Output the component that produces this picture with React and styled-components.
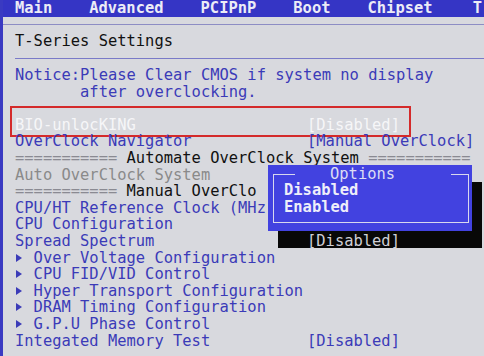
import React from 'react';
import styled, {createGlobalStyle} from 'styled-components';

const GlobalStyle = createGlobalStyle`
  html, body {
    margin: 0;
    padding: 0;
    background: #d8d9de;
  }
  body {
    font-family: "DejaVu Sans Mono", "Liberation Mono", monospace;
    font-size: 15.45px;
  }
`;

const Screen = styled.div`
  width: 484px;
  height: 356px;
  overflow: hidden;
  position: relative;
  box-sizing: border-box;
  border-left: 3px solid #3a3ac2;
  background: #d8d9de;
`;

const TopBar = styled.nav`
  display: flex;
  gap: 37px;
  height: 17px;
  padding-left: 12px;
  background: #3535c5;
  color: #ececf6;
  font-weight: bold;
  line-height: 17px;
  white-space: pre;
`;

const Tab = styled.span`
  margin-left: ${p => p.$push ? 'auto' : '0'};
  margin-right: ${p => p.$push ? '2px' : '0'};
`;

const Panel = styled.section`
  margin-top: 7px;
  border-top: 1px solid #8d8dc4;
`;

const Title = styled.h1`
  margin: 0 0 0 12px;
  height: 33px;
  font-size: 15.45px;
  font-weight: normal;
  line-height: 33px;
  color: #111;
  border-bottom: 1px solid #7a7ac8;
`;

const List = styled.div`
  padding: 8px 0 0 12px;
  line-height: 16.6px;
  white-space: pre;
`;

const Row = styled.div`
  display: grid;
  grid-template-columns: 292px 1fr;
  height: 16.6px;
  color: ${p => p.$color || '#3b3bb8'};
  position: relative;
`;

const Marked = styled(Row)`
  &::after {
    content: '';
    position: absolute;
    left: -5px;
    top: -11px;
    width: 397px;
    height: 27px;
    border: 2px solid #d42a2a;
    pointer-events: none;
  }
`;

const Value = styled.span`
  color: ${p => p.$color || 'inherit'};
  position: relative;
  z-index: ${p => p.$top ? 3 : 'auto'};
`;

const Line = styled.div`
  height: 16.6px;
  color: ${p => p.$color || '#3b3bb8'};
`;

const Eq = styled.span`
  color: #8a8a92;
`;

const Arrow = styled.span`
  display: inline-block;
  width: 18.6px;
  position: relative;
  height: 10px;
  &::before {
    content: '';
    position: absolute;
    left: 1px;
    top: 1px;
    border-left: 6px solid #3b3bb8;
    border-top: 4px solid transparent;
    border-bottom: 4px solid transparent;
  }
`;

const Popup = styled.div`
  position: absolute;
  left: 265px;
  top: 165px;
  width: 204px;
  height: 66px;
  box-sizing: border-box;
  padding: 9px 3px 8px 5px;
  background: #4242e0;
  box-shadow: 10px 17px 0 #080808;
  z-index: 2;
  color: #eeeefa;
`;

const Frame = styled.div`
  height: 100%;
  box-sizing: border-box;
  border: 1px solid #d8d8ee;
  border-top: none;
  display: flex;
  flex-direction: column;
`;

const FrameTop = styled.div`
  display: flex;
  align-items: center;
  height: 0;
  margin: 0 -1px;
`;

const Rule = styled.span`
  height: 1px;
  background: #d8d8ee;
  width: ${p => p.$w || 'auto'};
  flex: ${p => p.$w ? 'none' : '1'};
`;

const PopTitle = styled.span`
  padding: 0 56px 0 35px;
  line-height: 16px;
  color: #dcdcf4;
`;

const Options = styled.div`
  padding: 8px 0 0 10px;
  font-weight: bold;
  line-height: 16.6px;
`;

const subs = [
  'Over Voltage Configuration',
  'CPU FID/VID Control',
  'Hyper Transport Configuration',
  'DRAM Timing Configuration',
  'G.P.U Phase Control',
];

export default function App() {
  return (
    <Screen>
      <GlobalStyle />
      <TopBar>
        <Tab>Main</Tab>
        <Tab>Advanced</Tab>
        <Tab>PCIPnP</Tab>
        <Tab>Boot</Tab>
        <Tab>Chipset</Tab>
        <Tab $push>T</Tab>
      </TopBar>
      <Panel>
        <Title>T-Series Settings</Title>
        <List>
          <Line>Notice:Please Clear CMOS if system no display</Line>
          <Line>       after overclocking.</Line>
          <Line> </Line>
          <Marked $color="#f6f6f8">
            <span>BIO-unlocKING</span>
            <Value>[Disabled]</Value>
          </Marked>
          <Row>
            <span>OverClock Navigator</span>
            <Value>[Manual OverClock]</Value>
          </Row>
          <Line $color="#111"><Eq>===========</Eq> Automate OverClock System <Eq>===========</Eq></Line>
          <Line $color="#8a8a8a">Auto OverClock System</Line>
          <Line $color="#111"><Eq>===========</Eq> Manual OverClo</Line>
          <Line>CPU/HT Reference Clock (MHz</Line>
          <Line>CPU Configuration</Line>
          <Row>
            <span>Spread Spectrum</span>
            <Value $top $color="#cfcfd6">[Disabled]</Value>
          </Row>
          {subs.map(s => (
            <Line key={s}><Arrow />{s}</Line>
          ))}
          <Row>
            <span>Integated Memory Test</span>
            <Value>[Disabled]</Value>
          </Row>
        </List>
      </Panel>
      <Popup>
        <Frame>
          <FrameTop>
            <Rule $w="22px" />
            <PopTitle>Options</PopTitle>
            <Rule />
          </FrameTop>
          <Options>
            <div>Disabled</div>
            <div>Enabled</div>
          </Options>
        </Frame>
      </Popup>
    </Screen>
  );
}
